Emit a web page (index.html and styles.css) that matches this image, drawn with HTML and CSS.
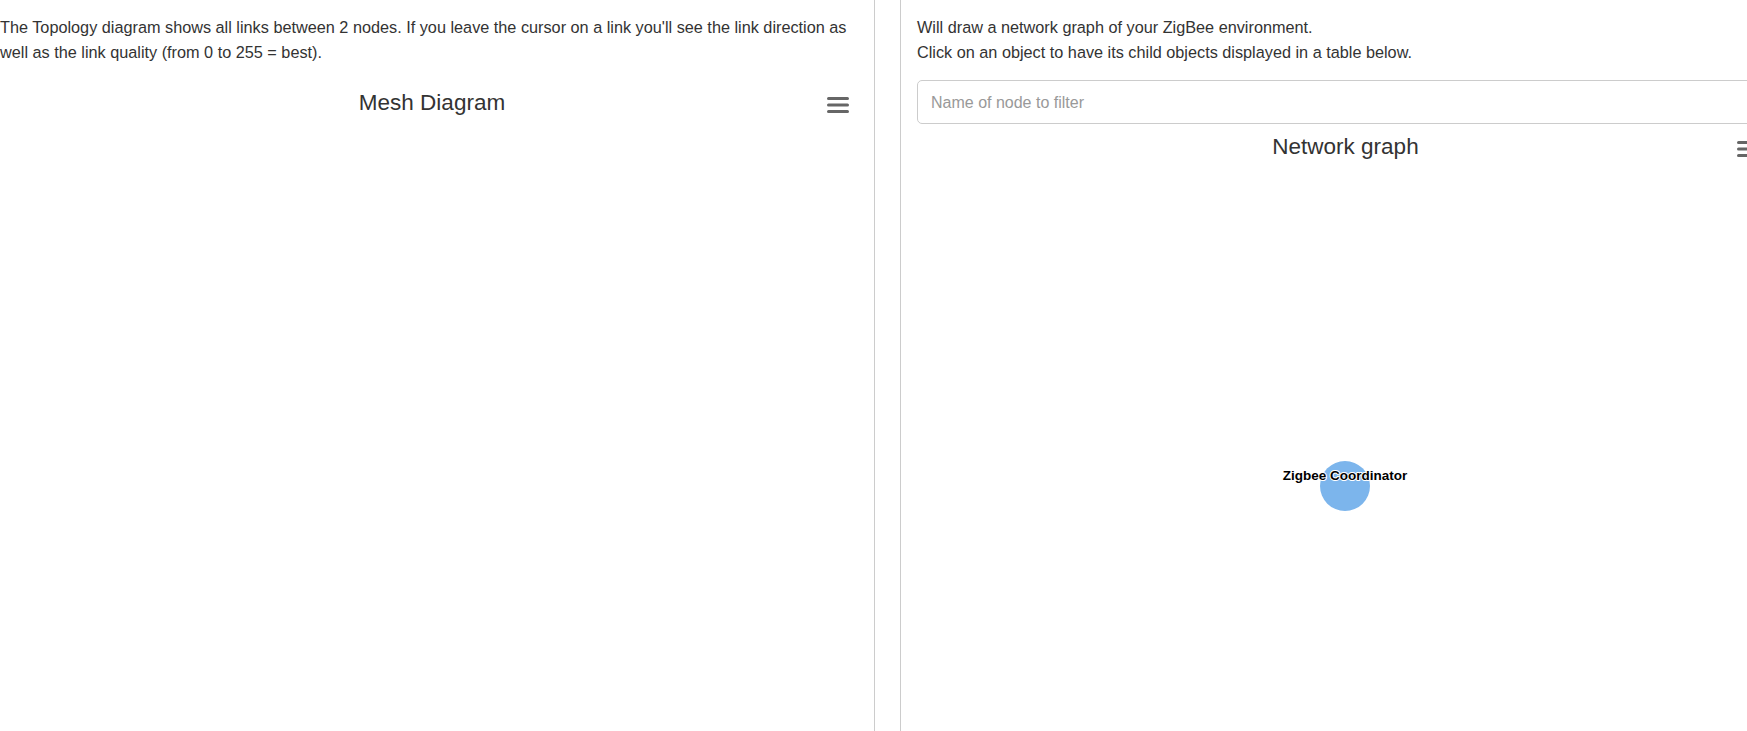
FILE: index.html
```html
<!DOCTYPE html>
<html lang="en">
<head>
<meta charset="utf-8">
<title>ZigBee Topology</title>
<link rel="stylesheet" href="styles.css">
</head>
<body>
<div class="layout">
  <section class="col col-left">
    <p class="intro">The Topology diagram shows all links between 2 nodes. If you leave the cursor on a link you'll see the link direction as well as the link quality (from 0 to 255 = best).</p>
    <div class="chart">
      <div class="chart-head">
        <h2 class="chart-title">Mesh Diagram</h2>
        <button class="menu-btn" aria-label="Chart menu">
          <svg width="22" height="18" viewBox="0 0 22 18"><path d="M1.5 1.5H20.5M1.5 8H20.5M1.5 14.5H20.5" stroke="#666" stroke-width="3" stroke-linecap="round" fill="none"/></svg>
        </button>
      </div>
    </div>
  </section>
  <section class="col col-right">
    <p class="intro">Will draw a network graph of your ZigBee environment.<br>Click on an object to have its child objects displayed in a table below.</p>
    <input class="filter" type="text" placeholder="Name of node to filter">
    <div class="chart">
      <div class="chart-head">
        <h2 class="chart-title">Network graph</h2>
        <button class="menu-btn" aria-label="Chart menu">
          <svg width="22" height="18" viewBox="0 0 22 18"><path d="M1.5 1.5H20.5M1.5 8H20.5M1.5 14.5H20.5" stroke="#666" stroke-width="3" stroke-linecap="round" fill="none"/></svg>
        </button>
      </div>
      <svg class="graph" width="857" height="560" viewBox="0 0 857 560">
        <circle cx="428" cy="362" r="25" fill="#7cb5ec"/>
        <text x="428" y="356" text-anchor="middle" class="node-label">Zigbee Coordinator</text>
      </svg>
    </div>
  </section>
</div>
</body>
</html>
```

FILE: styles.css
```css
html, body {
  margin: 0;
  padding: 0;
  background: #fff;
  overflow: hidden;
  height: 100%;
}
body {
  font-family: "Liberation Sans", Arial, sans-serif;
  color: #333;
  font-size: 16.25px;
}
.layout {
  display: flex;
  gap: 25px;
  min-height: 100vh;
  width: 1800px;
}
.col {
  padding-top: 15px;
  box-sizing: content-box;
  min-height: 100vh;
}
.col-left {
  width: 864px;
  padding-right: 10px;
  border-right: 1px solid #ccc;
  flex: none;
}
.col-right {
  width: 857px;
  padding-left: 16px;
  border-left: 1px solid #ccc;
  flex: none;
}
.intro {
  margin: 0 0 15px;
  line-height: 25px;
}
.col-left .intro {
  margin-right: 6px;
}
.filter {
  display: block;
  box-sizing: border-box;
  width: 100%;
  height: 44px;
  margin: 0;
  padding: 2px 13px 0;
  border: 1px solid #ccc;
  border-radius: 5px;
  font-family: "Liberation Sans", Arial, sans-serif;
  font-size: 16px;
  color: #333;
  outline: none;
}
.filter::placeholder {
  color: #999;
}
.chart {
  position: relative;
}
.chart-head {
  position: relative;
  padding-top: 12px;
  height: 40px;
}
.chart-title {
  margin: 0;
  font-weight: normal;
  font-size: 22.5px;
  line-height: 22px;
  text-align: center;
  color: #333;
}
.menu-btn {
  position: absolute;
  top: 17px;
  right: 15px;
  padding: 0;
  margin: 0;
  border: 0;
  background: none;
  line-height: 0;
}
.graph {
  display: block;
  margin-top: -52px;
}
.node-label {
  font-family: "Liberation Sans", Arial, sans-serif;
  font-weight: bold;
  font-size: 13.5px;
  fill: #000;
  stroke: #fff;
  stroke-width: 2px;
  paint-order: stroke;
  stroke-linejoin: round;
}
```
